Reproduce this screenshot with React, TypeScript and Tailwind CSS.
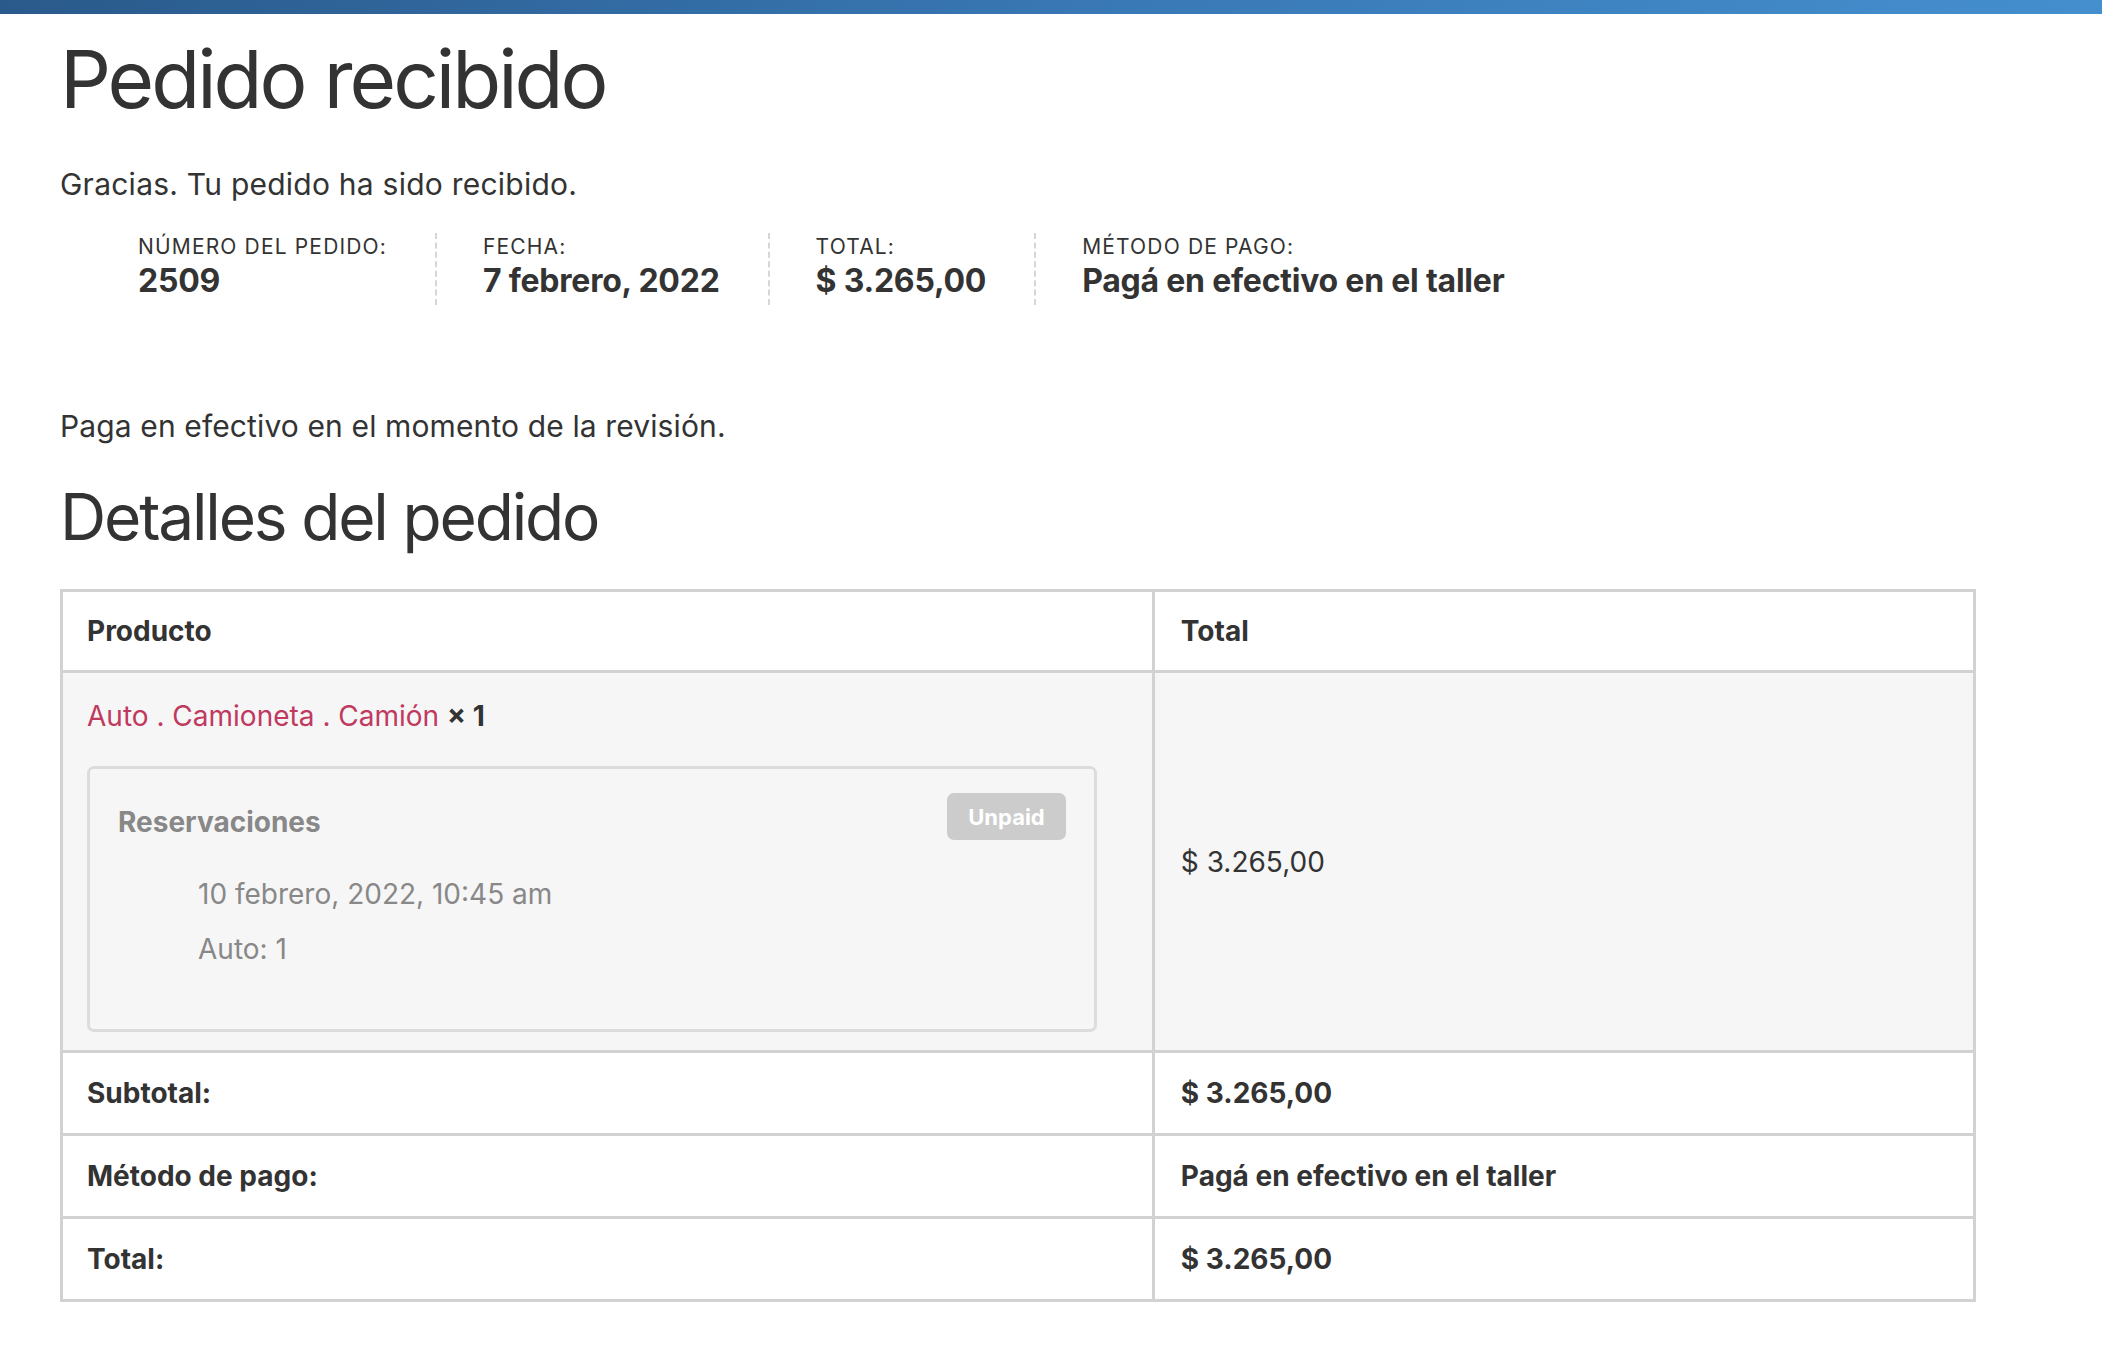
import React from "react";

const font = { fontFamily: "Inter, 'Noto Sans', sans-serif" };

function OverviewItem({ label, value, last }: { label: string; value: string; last?: boolean }) {
  return (
    <li
      className={
        "flex flex-col pl-[46px] pr-[48px] pb-[6px] " +
        (last ? "" : "border-r-2 border-dashed border-[#d6d6d6]")
      }
    >
      <span className="text-[21px] leading-[28px] tracking-[0.055em] uppercase text-[#333]">{label}</span>
      <strong className="mt-[2px] text-[32px] leading-[36px] tracking-[-0.007em] font-bold text-[#333]">{value}</strong>
    </li>
  );
}

export default function App() {
  return (
    <div className="min-h-[1366px] bg-white text-[#333]" style={font}>
      <div className="h-[14px] bg-linear-to-r from-[#2a5a8b] via-[#3877b3] to-[#458fcf]" />
      <div className="pl-[60px]">
        <h1 className="mt-[25px] text-[80px] leading-[80px] font-normal tracking-[-0.038em] text-[#333]">
          Pedido recibido
        </h1>
        <p className="mt-[44px] text-[30px] leading-[42px] tracking-[0.008em]">Gracias. Tu pedido ha sido recibido.</p>
        <ul className="mt-[28px] ml-[32px] flex">
          <OverviewItem label="Número del pedido:" value="2509" />
          <OverviewItem label="Fecha:" value="7 febrero, 2022" />
          <OverviewItem label="Total:" value="$ 3.265,00" />
          <OverviewItem label="Método de pago:" value="Pagá en efectivo en el taller" last />
        </ul>
        <p className="mt-[100px] text-[30px] leading-[42px] tracking-[0.004em]">
          Paga en efectivo en el momento de la revisión.
        </p>
        <h2 className="mt-[38px] text-[64px] leading-[64px] font-normal tracking-[-0.034em]">Detalles del pedido</h2>

        <table className="mt-[40px] w-[1916px] border-collapse border-[3px] border-[#dadada] text-[28px] leading-[42px]">
          <colgroup>
            <col className="w-[1092px]" />
            <col className="w-[824px]" />
          </colgroup>
          <thead>
            <tr>
              <th className="h-[81px] border-[3px] border-[#d2d2d2] px-[24px] text-left font-bold">Producto</th>
              <th className="h-[81px] border-[3px] border-[#d2d2d2] px-[26px] text-left font-bold">Total</th>
            </tr>
          </thead>
          <tbody>
            <tr className="bg-[#f6f6f6]">
              <td className="border-[3px] border-[#d2d2d2] px-[24px] pt-[22px] pb-[18px] align-top">
                <div>
                  <a className="text-[#c0395f]" href="#">
                    Auto . Camioneta . Camión
                  </a>{" "}
                  <strong className="font-bold">×&nbsp;1</strong>
                </div>
                <div className="mt-[29px] w-[1010px] rounded-[7px] border-[3px] border-[#dcdcdc] bg-[#f6f6f6] pl-[28px] pr-[28px] pt-[24px] pb-[59px]">
                  <div className="flex items-start justify-between">
                    <span className="mt-[8px] font-bold text-[#888]">Reservaciones</span>
                    <span className="flex h-[47px] w-[119px] items-center justify-center rounded-[7px] bg-[#cccccc] text-[22px] font-bold text-white">
                      Unpaid
                    </span>
                  </div>
                  <ul className="mt-[30px] pl-[80px] text-[#888]">
                    <li>10 febrero, 2022, 10:45 am</li>
                    <li className="mt-[13px]">Auto: 1</li>
                  </ul>
                </div>
              </td>
              <td className="border-[3px] border-[#d2d2d2] px-[26px] align-middle">$ 3.265,00</td>
            </tr>
          </tbody>
          <tfoot>
            <tr>
              <th className="h-[83px] border-[3px] border-[#d2d2d2] px-[24px] text-left font-bold">Subtotal:</th>
              <td className="h-[83px] border-[3px] border-[#d2d2d2] px-[26px] font-bold">$ 3.265,00</td>
            </tr>
            <tr>
              <th className="h-[83px] border-[3px] border-[#d2d2d2] px-[24px] text-left font-bold">Método de pago:</th>
              <td className="h-[83px] border-[3px] border-[#d2d2d2] px-[26px] font-bold">Pagá en efectivo en el taller</td>
            </tr>
            <tr>
              <th className="h-[83px] border-[3px] border-[#d2d2d2] px-[24px] text-left font-bold">Total:</th>
              <td className="h-[83px] border-[3px] border-[#d2d2d2] px-[26px] font-bold">$ 3.265,00</td>
            </tr>
          </tfoot>
        </table>
      </div>
    </div>
  );
}
